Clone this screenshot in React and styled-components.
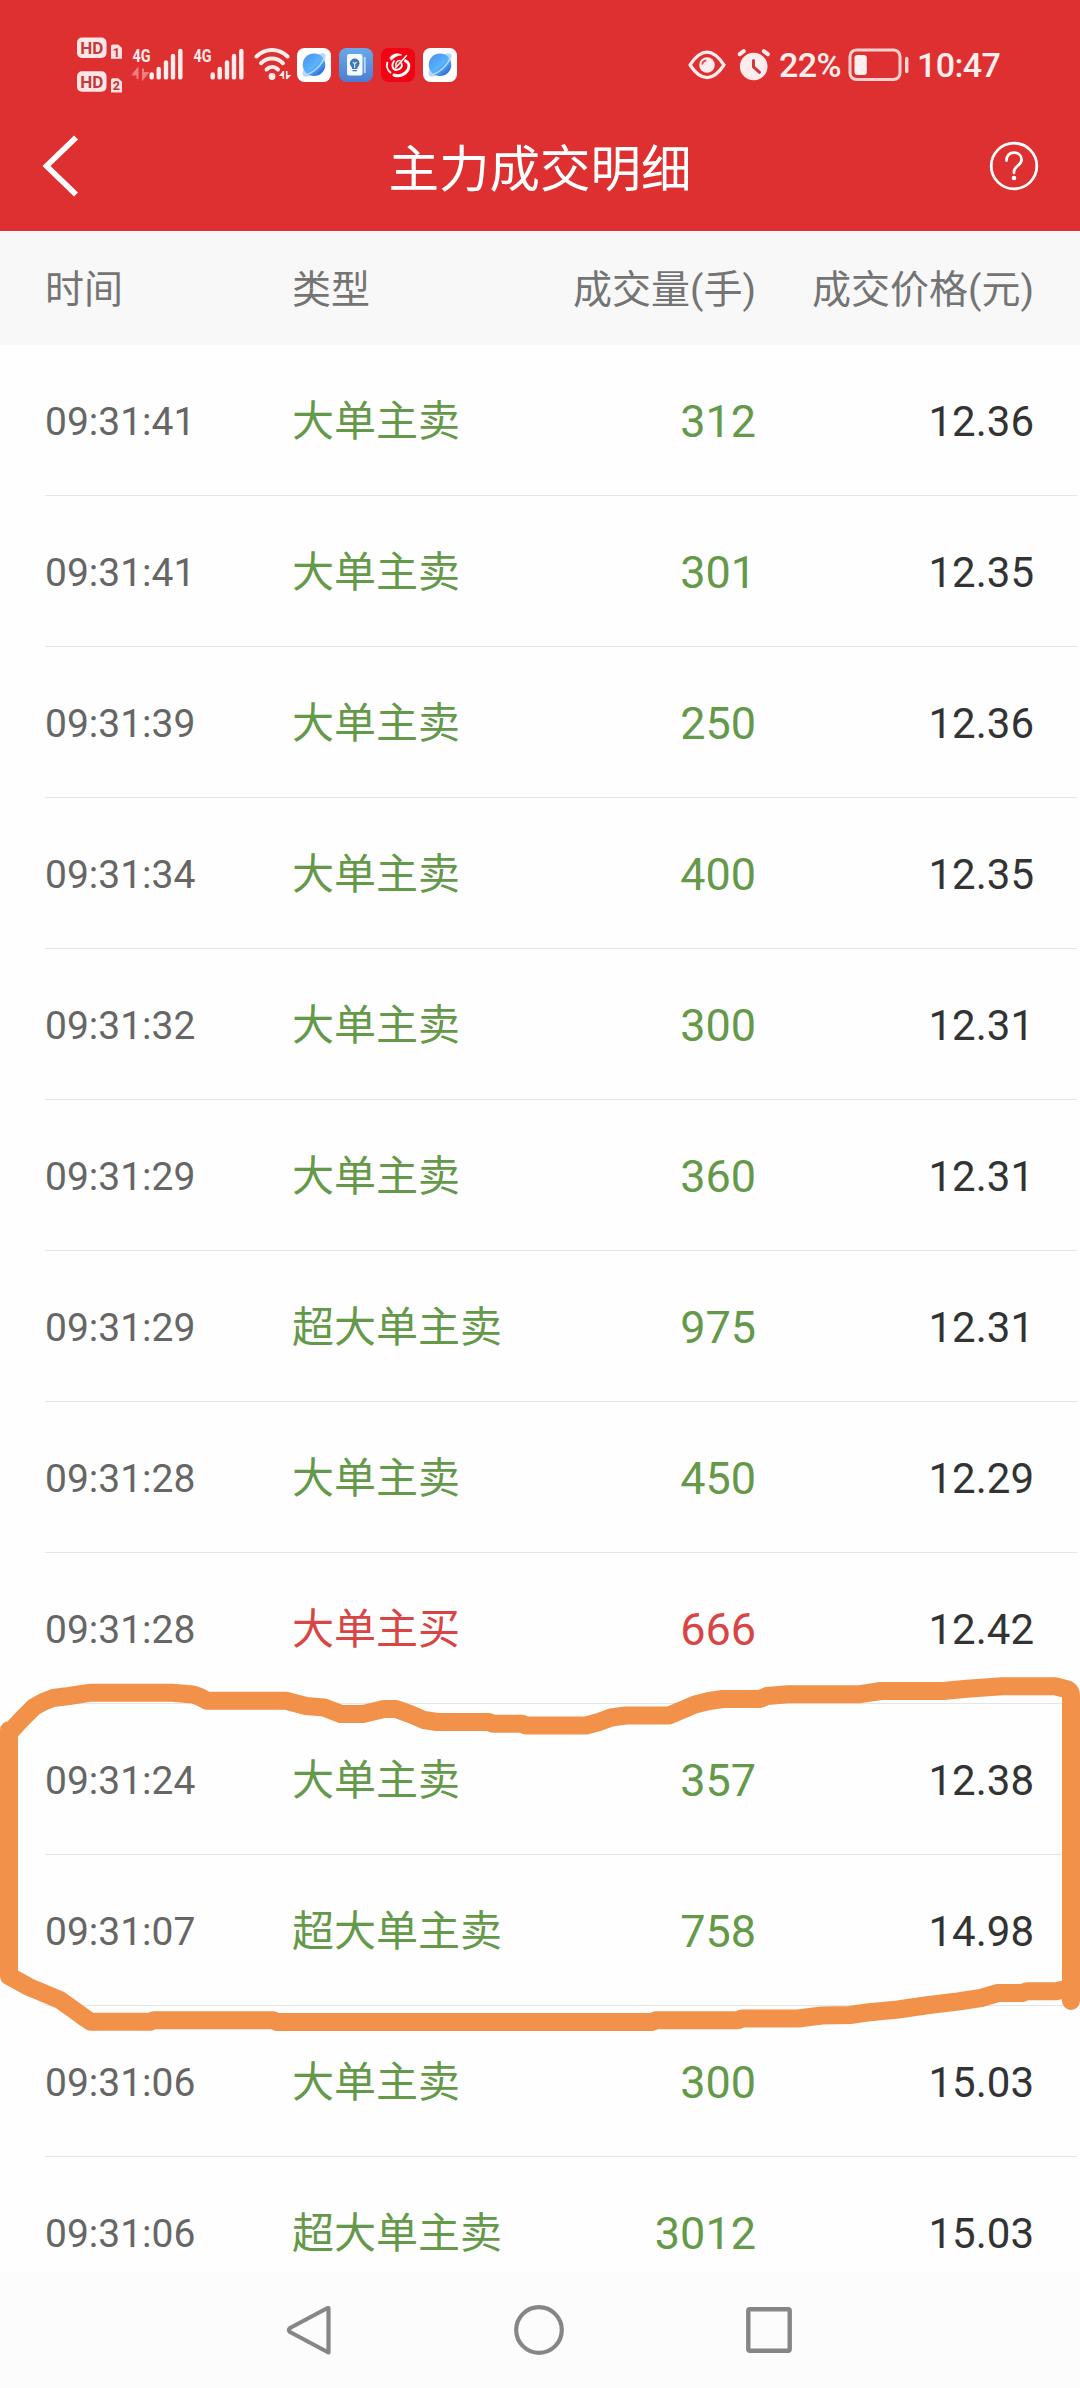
import React from 'react';
import styled, { createGlobalStyle } from 'styled-components';

const GlobalStyle = createGlobalStyle`
  * {
    box-sizing: border-box;
  }

  body {
    margin: 0;
    background-color: #fefefe;
    font-family: Roboto, "Noto Sans CJK SC", sans-serif;
  }

  svg {
    display: block;
    flex: none;
  }
`;

const Screen = styled.div`
  position: relative;
  display: flex;
  flex-flow: column nowrap;
  width: 1080px;
  height: 2388px;
  overflow: hidden;
`;

const Top = styled.header`
  flex: none;
  height: 231px;
  background-color: #de3031;
  color: #fff;
`;

const StatusBar = styled.div`
  display: flex;
  align-items: center;
  height: 130px;
  padding: 0 77px;
`;

const AppIcons = styled.div`
  display: flex;
  gap: 8px;
  margin-left: 4px;
`;

const StatusRight = styled.div`
  display: flex;
  align-items: center;
  margin-left: auto;
`;

const StatusText = styled.span`
  flex: none;
  width: ${({ $width }) => $width}px;
  margin-left: 8px;
  font-size: 34px;
  font-weight: 500;
  line-height: 40px;
  letter-spacing: -0.6px;
  color: #ffeeee;
  white-space: nowrap;
`;

const AlarmSlot = styled.span`
  margin-left: 11px;
`;

const TitleBar = styled.div`
  display: flex;
  align-items: center;
  justify-content: space-between;
  height: 72px;
  padding: 0 41px 0 42px;
`;

const Title = styled.h1`
  margin: 0;
  padding: 7px 0 0 9px;
  font-size: 50.5px;
  font-weight: 400;
  line-height: 72px;
`;

const columns = `
  display: grid;
  grid-template-columns: 247px 223px 241px 1fr;
  align-items: center;
`;

const TableHead = styled.div`
  ${columns}
  flex: none;
  height: 114px;
  padding: 4px 46px 0 45px;
  background-color: #f8f8f8;
  color: #747474;
  font-size: 39px;
  line-height: 56px;
  white-space: nowrap;
`;

const HeadCell = styled.span`
  justify-self: ${({ $right }) => $right ? 'end' : 'start'};
`;

const List = styled.main`
  flex: 1;
  min-height: 0;
  overflow: hidden;
`;

const Row = styled.div`
  ${columns}
  height: 151px;
  margin: 0 3px 0 45px;
  padding: 4px 43px 0 0;
  border-bottom: 1px solid #e6e6e6;
  line-height: 60px;
  white-space: nowrap;
`;

const Time = styled.span`
  font-size: 39px;
  color: #666;
`;

const Kind = styled.span`
  font-size: 42px;
  color: ${({ $buy }) => $buy ? '#d94444' : '#65994a'};
`;

const Volume = styled.span`
  justify-self: end;
  font-size: 45px;
  color: ${({ $buy }) => $buy ? '#d94444' : '#65994a'};
`;

const Price = styled.span`
  justify-self: end;
  font-size: 42px;
  color: #333;
`;

const NavBar = styled.nav`
  display: flex;
  flex: none;
  align-items: center;
  justify-content: space-between;
  height: 116px;
  padding: 0 288px 0 286px;
  background-color: #fcfcfc;
`;

const Scribble = styled.svg`
  position: absolute;
  top: 1670px;
  left: 0;
  pointer-events: none;
`;

const rows = [
  ['09:31:41', '大单主卖', '312', '12.36'],
  ['09:31:41', '大单主卖', '301', '12.35'],
  ['09:31:39', '大单主卖', '250', '12.36'],
  ['09:31:34', '大单主卖', '400', '12.35'],
  ['09:31:32', '大单主卖', '300', '12.31'],
  ['09:31:29', '大单主卖', '360', '12.31'],
  ['09:31:29', '超大单主卖', '975', '12.31'],
  ['09:31:28', '大单主卖', '450', '12.29'],
  ['09:31:28', '大单主买', '666', '12.42'],
  ['09:31:24', '大单主卖', '357', '12.38'],
  ['09:31:07', '超大单主卖', '758', '14.98'],
  ['09:31:06', '大单主卖', '300', '15.03'],
  ['09:31:06', '超大单主卖', '3012', '15.03'],
];

const SimBadges = () => (
  <svg width="55" height="60" viewBox="77 35 55 60" fontFamily="Roboto" fontWeight="700">
    {[37.5, 71.3].map((y, i) => (
      <g key={y}>
        <rect x="77" y={y} width="29.5" height="20.4" rx="5" fill="#ffe6e6" />
        <text x="91.8" y={y + 16.2} fontSize="17" textAnchor="middle" fill="#c23a3c">HD</text>
        <path d={`M111 ${y + 8.5} q0 -1.6 1.6 -1.6 h5.6 l3.8 3.6 v10.8 h-11z`} fill="#ffdede" />
        <text x="116.4" y={y + 19} fontSize="12.5" textAnchor="middle" fill="#b8383a">{i + 1}</text>
      </g>
    ))}
  </svg>
);

const Signal = ({ arrows }) => (
  <svg width="61" height="60" viewBox="132 35 61 60">
    <text x="132.5" y="62.4" fontSize="19" fontWeight="700" fontFamily="Roboto" textLength="18" lengthAdjust="spacingAndGlyphs" fill="#ffeaea">4G</text>
    {arrows && <path d="M137.5 79 V69 L133 74.5 H137 M143 68.5 V78.5 L147.5 73 H143" fill="#f27d80" stroke="#f27d80" strokeWidth="2" />}
    {[[151.7, 74.5], [158.7, 69], [166, 62.5], [173, 56], [180.3, 51]].map(([x, y]) => (
      <path key={x} d={`M${x} ${y} V77.4`} stroke="#ffecec" strokeWidth="4.4" strokeLinecap="round" />
    ))}
  </svg>
);

const Wifi = () => (
  <svg width="39" height="60" viewBox="253 35 39 60" fill="none" stroke="#ffecec" strokeWidth="4" strokeLinecap="round">
    <path d="M255.5 56.5 C264.5 47.8 277.5 47.8 286.5 56.5" />
    <path d="M260 63.2 C266.5 57 275.5 57 282 63.2" />
    <path d="M265.5 69.5 C269 66 273.5 66 277 69.5" />
    <circle cx="271" cy="76.5" r="3.4" fill="#ffecec" stroke="none" />
    <path d="M282.3 79.5 V71 L277.7 76 H282 M285.5 71 V79.5 L290.5 75 H286" fill="#ffecec" stroke="none" />
    <path d="M282.3 71 V79 M285.7 71 V79" strokeWidth="1.6" strokeLinecap="butt" />
  </svg>
);

const BrowserIcon = () => (
  <svg width="34" height="34" viewBox="0 0 34 34">
    <defs>
      <linearGradient id="planet" x1="0.15" y1="0.1" x2="0.85" y2="0.9">
        <stop offset="0" stopColor="#4d96f3" />
        <stop offset="0.55" stopColor="#5ab4fb" />
        <stop offset="1" stopColor="#2b66dc" />
      </linearGradient>
    </defs>
    <rect width="34" height="34" rx="7.5" fill="#fff" />
    <ellipse cx="17" cy="17" rx="15.2" ry="6" transform="rotate(-46 17 17)" fill="#b9d5fb" />
    <circle cx="17" cy="16.7" r="11.3" fill="url(#planet)" />
    <path d="M6.5 27 C14 27 26.5 17 27.8 7" fill="none" stroke="#b5dafc" strokeWidth="1.6" />
  </svg>
);

const BookIcon = () => (
  <svg width="34" height="34" viewBox="0 0 34 34">
    <defs>
      <linearGradient id="book" x1="0" y1="0" x2="0" y2="1">
        <stop offset="0" stopColor="#69a8eb" />
        <stop offset="1" stopColor="#4c7ed0" />
      </linearGradient>
    </defs>
    <rect width="34" height="34" rx="7.5" fill="url(#book)" />
    <rect x="8" y="6" width="15.5" height="21.5" rx="2" fill="#f5faff" />
    <path d="M25.8 9 V25" stroke="#b8d6f6" strokeWidth="2" />
    <circle cx="15.7" cy="15.3" r="4.8" fill="#4176b5" />
    <path d="M13 19 h5.4 v2 h-5.4z M13.5 22 h4.4 v1.2 h-4.4z" fill="#4176b5" />
    <path d="M13.8 14 l1.9 2 l1.9 -2 M15.7 16 v4" stroke="#d9e9fb" strokeWidth="1.1" fill="none" />
  </svg>
);

const SwirlIcon = () => (
  <svg width="34" height="34" viewBox="0 0 34 34" fill="none" stroke="#fff" strokeLinecap="round">
    <rect width="34" height="34" rx="7.5" fill="#f20313" stroke="none" />
    <path d="M9 9.5 C12 5.5 17 5 20.5 7 C16.5 7 13 9 10.5 12z" fill="#fff" strokeWidth="0.8" />
    <path d="M6.3 14.5 C5.3 18.5 6.8 22.5 9.5 24.5" strokeWidth="1.8" />
    <path d="M13 27 C18 29 25 26.5 27.3 21 C28.8 17 27 13.8 24.5 12.8" strokeWidth="3" />
    <path d="M13 13 C10 17 11.5 21.5 15 22 C19.5 22 22 18 20.5 15.5" strokeWidth="1.9" />
    <path d="M25.5 7.5 L14.5 20" strokeWidth="1.5" />
    <path d="M19 12.5 C15.5 12.5 14.5 15.5 15 18" strokeWidth="1.5" />
  </svg>
);

const Eye = () => (
  <svg width="38" height="30" viewBox="0 0 38 30" fill="none">
    <path d="M2 15 C8 6 13.5 2.2 19 2.2 C24.5 2.2 30 6 36 15 C30 24 24.5 27.6 19 27.6 C13.5 27.6 8 24 2 15z" stroke="#ffecec" strokeWidth="3.2" strokeLinejoin="round" />
    <circle cx="19" cy="15" r="7.8" fill="#ffecec" />
    <path d="M14.3 14.5 C14.5 12 16 10.7 18.3 10.5" stroke="#dc4c4e" strokeWidth="1.8" />
  </svg>
);

const Alarm = () => (
  <svg width="34" height="34" viewBox="0 0 34 34" fill="none" strokeLinecap="round">
    <circle cx="16.7" cy="18.5" r="13.8" fill="#ffecec" />
    <path d="M2.8 6.2 L6.8 3.2 M26.8 3.2 L30.8 6.2" stroke="#de3031" strokeWidth="7" />
    <path d="M2.8 6.2 L6.8 3.2 M26.8 3.2 L30.8 6.2" stroke="#ffecec" strokeWidth="4" />
    <path d="M16.5 12.5 V18.8 L22.5 24.3" stroke="#ca3a3c" strokeWidth="3" />
  </svg>
);

const Battery = () => (
  <svg width="61" height="34" viewBox="0 0 61 34" fill="none">
    <rect x="2" y="2" width="50" height="29.5" rx="6.5" stroke="#ffd0d0" strokeWidth="3" />
    <rect x="6.5" y="7" width="12.3" height="20" rx="3" fill="#fff0f0" />
    <path d="M58.7 10.5 V23.5" stroke="#ffd6d6" strokeWidth="3.4" strokeLinecap="round" />
  </svg>
);

const BackArrow = () => (
  <svg width="40" height="66" viewBox="0 0 40 66" fill="none">
    <path d="M34 4.5 L4.5 33 L34 61.5" stroke="#fff" strokeWidth="5.6" />
  </svg>
);

const HelpIcon = () => (
  <svg width="50" height="50" viewBox="0 0 50 50" fill="none" stroke="#fff" strokeLinecap="round">
    <circle cx="25" cy="25" r="22.8" strokeWidth="2.8" />
    <path d="M17.5 19.5 C17.5 14.5 20.5 11.7 25 11.7 C29.5 11.7 32.6 14.7 32.6 18.8 C32.6 24.5 25 25 25 30.5 V31.8" strokeWidth="2.8" />
    <circle cx="25" cy="37" r="2.3" fill="#fff" stroke="none" />
  </svg>
);

const NavButtons = () => (
  <>
    <svg width="46" height="52" viewBox="0 0 46 52" fill="none">
      <path d="M42.5 4 V48 Q42.5 49 41.5 48 L4 28 Q2 26 4 24 L41.5 4z" stroke="#868686" strokeWidth="4.2" strokeLinejoin="round" />
    </svg>
    <svg width="50" height="50" viewBox="0 0 50 50" fill="none">
      <circle cx="25" cy="25" r="22.8" stroke="#868686" strokeWidth="4.2" />
    </svg>
    <svg width="46" height="46" viewBox="0 0 46 46" fill="none">
      <rect x="2.3" y="2.3" width="41.4" height="41.4" rx="1.5" stroke="#868686" strokeWidth="4.4" />
    </svg>
  </>
);

// hand-drawn loop round the two trades where the price drops
const Marker = () => (
  <Scribble width="1080" height="350" viewBox="0 1670 1080 350" overflow="visible" fill="none">
    <path
      d="M9 1733 L22 1719 L28 1713 L34 1707 L43 1702 L53 1698 L69 1696 L91 1692.7 H172 L193 1694.5 L200 1697 L207 1700.7 H286 L306 1706 L324 1707.5 L341 1714 H363 L384 1709 H396 L410 1714 L424 1720 L437 1722 H489 L493 1723.7 H522 L526 1725.5 H586 L599 1722 L611 1717.5 L626 1715.5 H669 L695 1704.5 L709 1701 L723 1699 H760 L767 1696 L788 1694.2 H860 L881 1691 H943 L967 1688.7 L1002 1686.2 H1055 L1066 1689 Q1071 1690 1071 1696 V2001
      M9 1730 V1976 L29 1987 L60 2000 L74 2010 L85 2018 L91 2021.8 H150 L154 2020.2 H273 L277 2022 H652 L656 2020.3 H738 L742 2018.5 H798 L822 2015.5 L850 2015 L867 2012.5 L898 2009.5 L929 2005 L958 2001.5 L981 1998 L998 1993 H1022 L1027 1991.2 H1056 L1070 1988"
      stroke="#f29149"
      strokeWidth="18"
      strokeLinecap="round"
      strokeLinejoin="round"
    />
  </Scribble>
);

const App = () => {
  return (
    <>
      <GlobalStyle />
      <Screen>
        <Top>
          <StatusBar>
            <SimBadges />
            <Signal arrows />
            <Signal />
            <Wifi />
            <AppIcons>
              <BrowserIcon />
              <BookIcon />
              <SwirlIcon />
              <BrowserIcon />
            </AppIcons>
            <StatusRight>
              <Eye />
              <AlarmSlot><Alarm /></AlarmSlot>
              <StatusText $width={69}>22%</StatusText>
              <Battery />
              <StatusText $width={86}>10:47</StatusText>
            </StatusRight>
          </StatusBar>
          <TitleBar>
            <BackArrow />
            <Title>主力成交明细</Title>
            <HelpIcon />
          </TitleBar>
        </Top>

        <TableHead>
          <HeadCell>时间</HeadCell>
          <HeadCell>类型</HeadCell>
          <HeadCell $right>成交量(手)</HeadCell>
          <HeadCell $right>成交价格(元)</HeadCell>
        </TableHead>

        <List>
          {rows.map(([time, kind, volume, price], i) => {
            const buy = kind.endsWith('买');
            return (
              <Row key={i}>
                <Time>{time}</Time>
                <Kind $buy={buy}>{kind}</Kind>
                <Volume $buy={buy}>{volume}</Volume>
                <Price>{price}</Price>
              </Row>
            );
          })}
        </List>

        <NavBar>
          <NavButtons />
        </NavBar>
        <Marker />
      </Screen>
    </>
  );
};

export default App;
